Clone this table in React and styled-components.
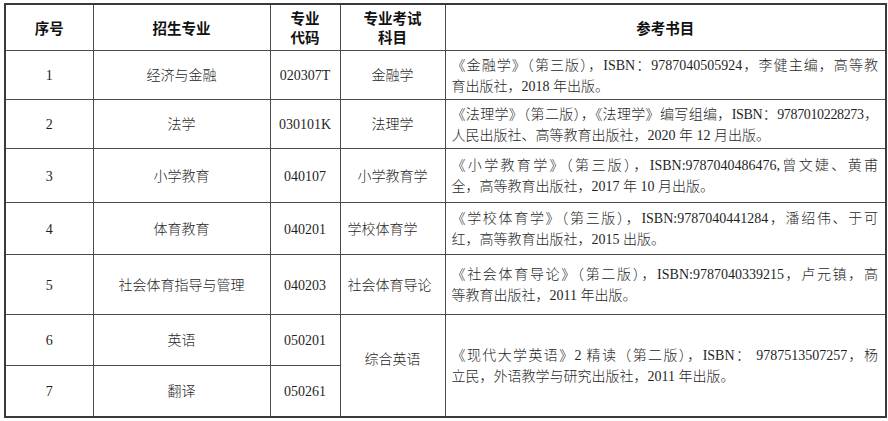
import React from 'react'
import styled, { createGlobalStyle } from 'styled-components'

const GlobalStyle = createGlobalStyle`
  html, body {
    margin: 0;
    padding: 0;
    background: #ffffff;
  }
  body {
    font-family: 'Liberation Serif', 'Noto Sans CJK SC', serif;
    color: #1f1f1f;
  }
`

const columns = [88, 177, 70, 105, 441]

const rows = [
  {
    id: 1,
    major: '经济与金融',
    code: '020307T',
    subject: '金融学',
    height: 49,
    book: [
      '《金融学》（第三版），ISBN：9787040505924，李健主编，高等教',
      '育出版社，2018 年出版。',
    ],
  },
  {
    id: 2,
    major: '法学',
    code: '030101K',
    subject: '法理学',
    height: 49,
    tight: true,
    book: [
      '《法理学》（第二版），《法理学》编写组编，ISBN：9787010228273，',
      '人民出版社、高等教育出版社，2020 年 12 月出版。',
    ],
  },
  {
    id: 3,
    major: '小学教育',
    code: '040107',
    subject: '小学教育学',
    height: 54,
    book: [
      '《小学教育学》（第三版），ISBN:9787040486476,曾文婕、黄甫',
      '全，高等教育出版社，2017 年 10 月出版。',
    ],
  },
  {
    id: 4,
    major: '体育教育',
    code: '040201',
    subject: '学校体育学',
    subjectLeft: true,
    height: 52,
    book: [
      '《学校体育学》（第三版），ISBN:9787040441284，潘绍伟、于可',
      '红，高等教育出版社，2015 出版。',
    ],
  },
  {
    id: 5,
    major: '社会体育指导与管理',
    code: '040203',
    subject: '社会体育导论',
    subjectLeft: true,
    height: 60,
    book: [
      '《社会体育导论》（第二版），ISBN:9787040339215，卢元镇，高',
      '等教育出版社，2011 年出版。',
    ],
  },
]

const englishBook = [
  '《现代大学英语》2 精读（第二版），ISBN： 9787513507257，杨',
  '立民，外语教学与研究出版社，2011 年出版。',
]

const Page = styled.div`
  padding: 3px 0 0 4px;
`

const Table = styled.table`
  border-collapse: collapse;
  table-layout: fixed;
  width: 881px;
  border: 2px solid #3a3a3a;
`

const Row = styled.tr`
  height: ${(p) => p.$h}px;
`

const HeadCell = styled.th`
  border: 1px solid #4a4a4a;
  font-family: 'Noto Sans CJK SC', sans-serif;
  font-weight: 700;
  font-size: 14.5px;
  line-height: 19px;
  color: #111;
  text-align: center;
  vertical-align: middle;
  padding: 0 4px;
`

const Cell = styled.td`
  border: 1px solid #4a4a4a;
  font-size: 14px;
  font-weight: 300;
  line-height: 21px;
  text-align: ${(p) => (p.$left ? 'left' : 'center')};
  vertical-align: middle;
  padding: ${(p) => (p.$left ? '2px 4px 0 7px' : '2px 4px 0')};
  padding-bottom: ${(p) => (p.$raise ? `${p.$raise}px` : '0')};
  white-space: nowrap;
  overflow: hidden;
`

const BookCell = styled.td`
  border: 1px solid #4a4a4a;
  font-size: 14px;
  font-weight: 300;
  line-height: 21px;
  vertical-align: middle;
  padding: 2px 7px 0 6px;
`

const Line = styled.span`
  display: block;
  white-space: nowrap;
  text-align: justify;
  text-align-last: ${(p) => (p.$full ? 'justify' : 'left')};
  letter-spacing: ${(p) => (p.$tight ? '-0.35px' : '0')};
`

const Book = ({ lines, tight, span }) => (
  <BookCell rowSpan={span}>
    {lines.map((text, i) => (
      <Line key={i} $full={i < lines.length - 1} $tight={tight && i === 0}>
        {text}
      </Line>
    ))}
  </BookCell>
)

export default function App() {
  return (
    <Page>
      <GlobalStyle />
      <Table>
        <colgroup>
          {columns.map((w, i) => (
            <col key={i} style={{ width: w }} />
          ))}
        </colgroup>
        <thead>
          <Row $h={46}>
            <HeadCell>序号</HeadCell>
            <HeadCell>招生专业</HeadCell>
            <HeadCell>
              专业
              <br />
              代码
            </HeadCell>
            <HeadCell>
              专业考试
              <br />
              科目
            </HeadCell>
            <HeadCell>参考书目</HeadCell>
          </Row>
        </thead>
        <tbody>
          {rows.map((r) => (
            <Row key={r.id} $h={r.height}>
              <Cell>{r.id}</Cell>
              <Cell>{r.major}</Cell>
              <Cell>{r.code}</Cell>
              <Cell $left={r.subjectLeft}>{r.subject}</Cell>
              <Book lines={r.book} tight={r.tight} />
            </Row>
          ))}
          <Row $h={51}>
            <Cell>6</Cell>
            <Cell>英语</Cell>
            <Cell>050201</Cell>
            <Cell rowSpan={2} $raise={14}>
              综合英语
            </Cell>
            <Book lines={englishBook} span={2} />
          </Row>
          <Row $h={52}>
            <Cell>7</Cell>
            <Cell>翻译</Cell>
            <Cell>050261</Cell>
          </Row>
        </tbody>
      </Table>
    </Page>
  )
}
